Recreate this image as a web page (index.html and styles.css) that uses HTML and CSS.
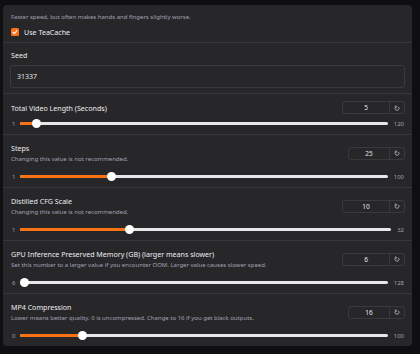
FILE: index.html
```html
<!DOCTYPE html>
<html>
<head lang="en">
    <meta charset="UTF-8">
    <title>FramePack settings</title>
    <link rel="stylesheet" href="styles.css">
</head>
<body>
    <div class="panel">
        <div class="block top">
            <p class="info">Faster speed, but often makes hands and fingers slightly worse.</p>
            <div class="check">
                <span class="box">
                    <svg width="6" height="6" viewBox="0 0 12 12"><path d="M2 6.5l2.8 2.8L10 3" fill="none" stroke="#fff" stroke-width="2.2" stroke-linecap="round" stroke-linejoin="round"/></svg>
                </span>
                <span class="check-text">Use TeaCache</span>
            </div>
        </div>

        <div class="block seed">
            <div class="label">Seed</div>
            <div class="textbox">31337</div>
        </div>

        <div class="block tight">
            <div class="head">
                <div class="titles">
                    <div class="label">Total Video Length (Seconds)</div>
                </div>
                <div class="num">
                    <span class="val">5</span>
                    <span class="reset"><svg width="6" height="6" viewBox="0 0 12 12"><path d="M3.2 3.6A4 4 0 1 0 8.8 3.6" fill="none" stroke="#c4c4c8" stroke-width="1.6"/><path d="M1.5 2.2h3.2v3.2" fill="none" stroke="#c4c4c8" stroke-width="1.6"/></svg></span>
                </div>
            </div>
            <div class="range">
                <span class="min">1</span>
                <div class="track">
                    <div class="fill" style="width: calc(4.5px + 0.0336 * (100% - 9px))"></div>
                    <div class="thumb" style="left: calc(0.0336 * (100% - 9px))"></div>
                </div>
                <span class="max">120</span>
            </div>
        </div>

        <div class="block">
            <div class="head">
                <div class="titles">
                    <div class="label">Steps</div>
                    <div class="info">Changing this value is not recommended.</div>
                </div>
                <div class="num narrow">
                    <span class="val">25</span>
                    <span class="reset"><svg width="6" height="6" viewBox="0 0 12 12"><path d="M3.2 3.6A4 4 0 1 0 8.8 3.6" fill="none" stroke="#c4c4c8" stroke-width="1.6"/><path d="M1.5 2.2h3.2v3.2" fill="none" stroke="#c4c4c8" stroke-width="1.6"/></svg></span>
                </div>
            </div>
            <div class="range">
                <span class="min">1</span>
                <div class="track">
                    <div class="fill" style="width: calc(4.5px + 0.2424 * (100% - 9px))"></div>
                    <div class="thumb" style="left: calc(0.2424 * (100% - 9px))"></div>
                </div>
                <span class="max">100</span>
            </div>
        </div>

        <div class="block">
            <div class="head">
                <div class="titles">
                    <div class="label">Distilled CFG Scale</div>
                    <div class="info">Changing this value is not recommended.</div>
                </div>
                <div class="num">
                    <span class="val">10</span>
                    <span class="reset"><svg width="6" height="6" viewBox="0 0 12 12"><path d="M3.2 3.6A4 4 0 1 0 8.8 3.6" fill="none" stroke="#c4c4c8" stroke-width="1.6"/><path d="M1.5 2.2h3.2v3.2" fill="none" stroke="#c4c4c8" stroke-width="1.6"/></svg></span>
                </div>
            </div>
            <div class="range">
                <span class="min">1</span>
                <div class="track">
                    <div class="fill" style="width: calc(4.5px + 0.2903 * (100% - 9px))"></div>
                    <div class="thumb" style="left: calc(0.2903 * (100% - 9px))"></div>
                </div>
                <span class="max">32</span>
            </div>
        </div>

        <div class="block">
            <div class="head">
                <div class="titles">
                    <div class="label">GPU Inference Preserved Memory (GB) (larger means slower)</div>
                    <div class="info">Set this number to a larger value if you encounter OOM. Larger value causes slower speed.</div>
                </div>
                <div class="num">
                    <span class="val">6</span>
                    <span class="reset"><svg width="6" height="6" viewBox="0 0 12 12"><path d="M3.2 3.6A4 4 0 1 0 8.8 3.6" fill="none" stroke="#c4c4c8" stroke-width="1.6"/><path d="M1.5 2.2h3.2v3.2" fill="none" stroke="#c4c4c8" stroke-width="1.6"/></svg></span>
                </div>
            </div>
            <div class="range">
                <span class="min">6</span>
                <div class="track">
                    <div class="fill" style="width: 4.5px"></div>
                    <div class="thumb" style="left: 0"></div>
                </div>
                <span class="max">128</span>
            </div>
        </div>

        <div class="block">
            <div class="head">
                <div class="titles">
                    <div class="label">MP4 Compression</div>
                    <div class="info">Lower means better quality. 0 is uncompressed. Change to 16 if you get black outputs.</div>
                </div>
                <div class="num narrow">
                    <span class="val">16</span>
                    <span class="reset"><svg width="6" height="6" viewBox="0 0 12 12"><path d="M3.2 3.6A4 4 0 1 0 8.8 3.6" fill="none" stroke="#c4c4c8" stroke-width="1.6"/><path d="M1.5 2.2h3.2v3.2" fill="none" stroke="#c4c4c8" stroke-width="1.6"/></svg></span>
                </div>
            </div>
            <div class="range">
                <span class="min">0</span>
                <div class="track">
                    <div class="fill" style="width: calc(4.5px + 0.16 * (100% - 9px))"></div>
                    <div class="thumb" style="left: calc(0.16 * (100% - 9px))"></div>
                </div>
                <span class="max">100</span>
            </div>
        </div>
    </div>
</body>
</html>
```

FILE: styles.css
```css
*{
    margin: 0;
    padding: 0;
    box-sizing: border-box;
}
body{
    background: #0f0f11;
    font-family: "Noto Sans", "Open Sans", sans-serif;
    color: #e4e4e7;
}
.panel{
    width: 409px;
    margin: 5px 0 0 3px;
    background: #27272a;
    border-radius: 4px;
}
.block{
    padding: 7px 7px 6px;
    border-top: 1px solid #38383c;
}
.block:first-child{
    border-top: none;
}
.label{
    font-size: 7.1px;
    line-height: 12px;
    padding-left: 1px;
    color: #ececef;
    white-space: nowrap;
}
.info{
    font-size: 6px;
    line-height: 10px;
    padding-left: 1px;
    color: #a1a1b0;
    white-space: nowrap;
}
/* top block */
.block.top{
    padding: 7px 7px 5px;
}
.check{
    display: flex;
    align-items: center;
    height: 10px;
    margin-top: 5px;
    padding-left: 1px;
}
.box{
    width: 8px;
    height: 8px;
    border-radius: 1.5px;
    background: #f97316;
    display: flex;
    align-items: center;
    justify-content: center;
    margin-right: 5px;
}
.check-text{
    font-size: 7.1px;
    color: #ececef;
}
/* seed */
.block.seed{
    padding: 6px 7px 5px;
}
.textbox{
    margin-top: 4px;
    height: 23px;
    border: 1px solid #3a3a3e;
    border-radius: 3px;
    font-size: 7px;
    line-height: 21px;
    padding-left: 6px;
}
/* slider blocks */
.head{
    display: flex;
    align-items: center;
    justify-content: space-between;
}
.num{
    display: flex;
    height: 13px;
    width: 63px;
    border: 1px solid #3a3a3e;
    border-radius: 3px;
    font-size: 6.5px;
}
.num.narrow{
    width: 57px;
}
.val{
    flex: 1;
    text-align: center;
    line-height: 11px;
}
.reset{
    width: 15px;
    border-left: 1px solid #3a3a3e;
    display: flex;
    align-items: center;
    justify-content: center;
}
.range{
    display: flex;
    align-items: center;
    height: 9px;
    margin-top: 8px;
    padding-left: 2px;
}
.block.tight .range{
    margin-top: 5px;
}
.min, .max{
    font-size: 6px;
    color: #a1a1aa;
}
.min{
    margin-right: 5px;
}
.max{
    margin-left: 6px;
    padding-right: 1px;
}
.track{
    flex: 1;
    height: 3.5px;
    background: #e7e7e9;
    border-radius: 2px;
    position: relative;
}
.fill{
    height: 100%;
    background: #f97316;
    border-radius: 2px;
}
.thumb{
    position: absolute;
    top: -2.75px;
    width: 9px;
    height: 9px;
    border-radius: 50%;
    background: #fff;
}
```
